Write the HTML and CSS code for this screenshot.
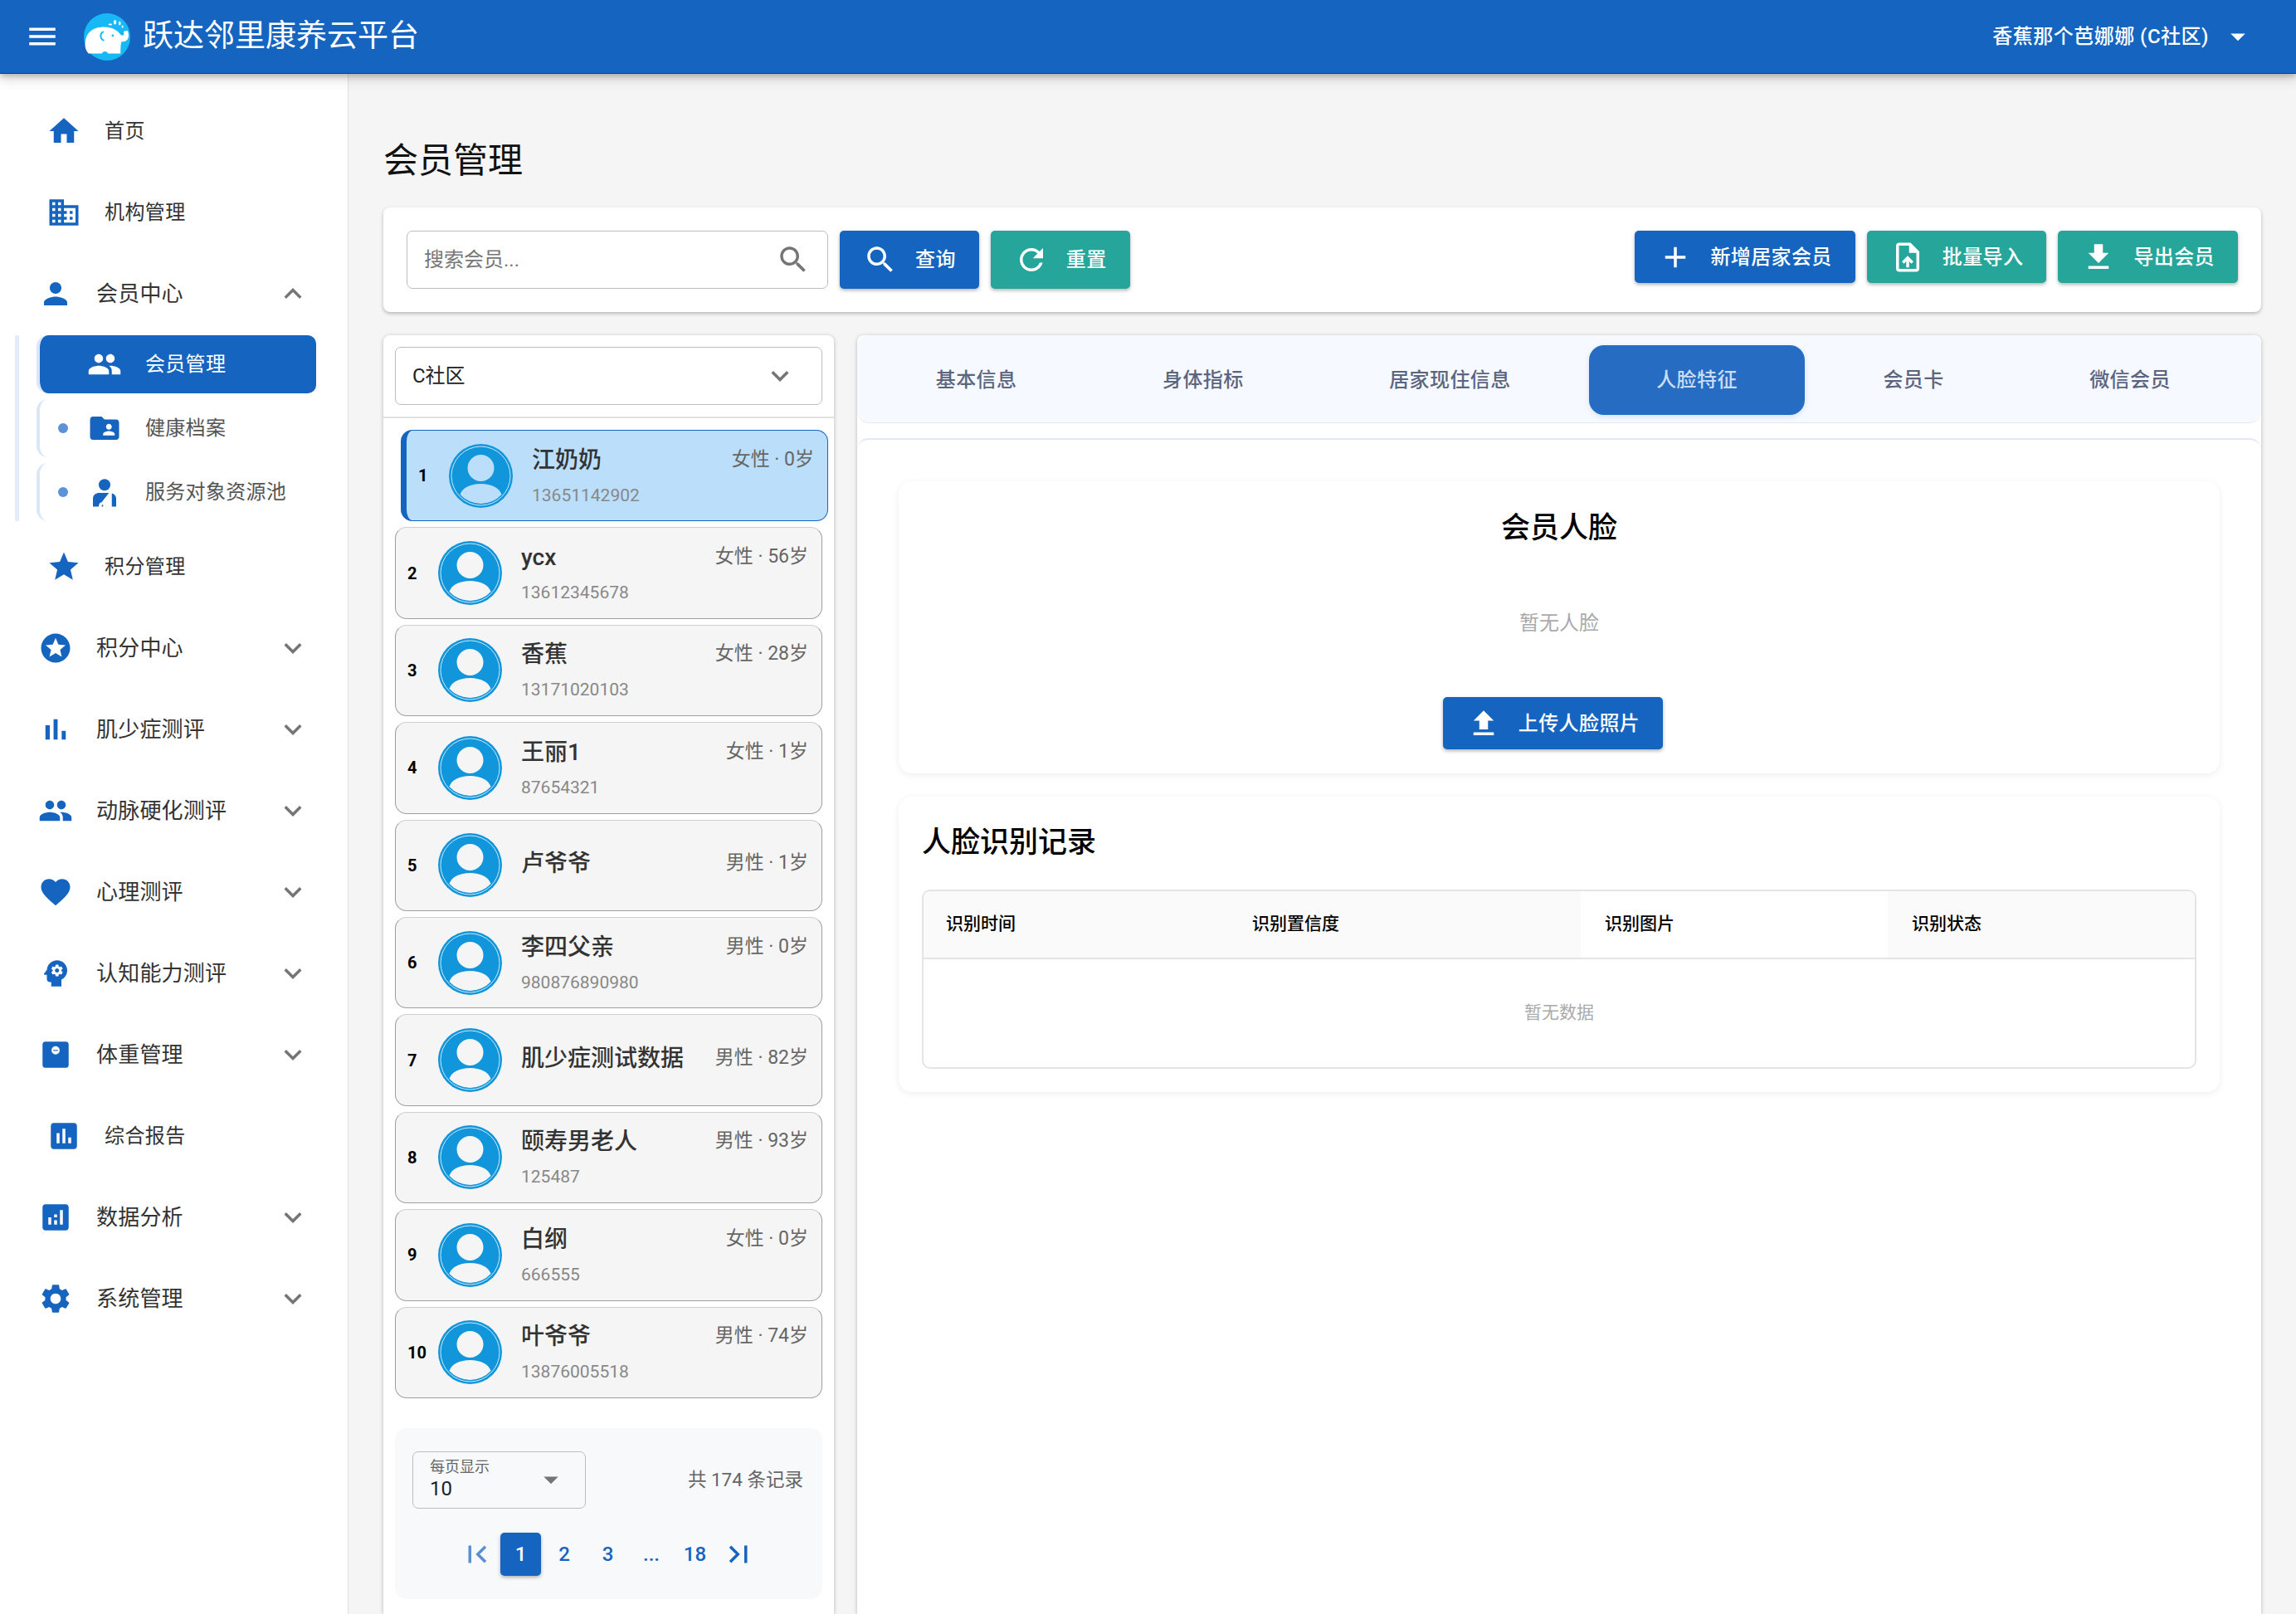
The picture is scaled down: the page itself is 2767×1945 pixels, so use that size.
FILE: index.html
```html
<!DOCTYPE html>
<html lang="zh-CN">
<head>
    <meta charset="UTF-8">
    <meta name="viewport" content="width=device-width, initial-scale=1.0">
    <title>跃达邻里康养云平台</title>
    <link rel="stylesheet" href="styles.css">
</head>
<body>
    <!-- 图标 -->
    <svg class="sprite" xmlns="http://www.w3.org/2000/svg">
        <symbol id="ic-menu" viewBox="0 0 24 24"><path d="M3 18h18v-2H3v2zm0-5h18v-2H3v2zm0-7v2h18V6H3z"/></symbol>
        <symbol id="ic-home" viewBox="0 0 24 24"><path d="M10 20v-6h4v6h5v-8h3L12 3 2 12h3v8z"/></symbol>
        <symbol id="ic-domain" viewBox="0 0 24 24"><path d="M12 7V3H2v18h20V7H12zM6 19H4v-2h2v2zm0-4H4v-2h2v2zm0-4H4V9h2v2zm0-4H4V5h2v2zm4 12H8v-2h2v2zm0-4H8v-2h2v2zm0-4H8V9h2v2zm0-4H8V5h2v2zm10 12h-8v-2h2v-2h-2v-2h2v-2h-2V9h8v10zm-2-8h-2v2h2v-2zm0 4h-2v2h2v-2z"/></symbol>
        <symbol id="ic-person" viewBox="0 0 24 24"><path d="M12 12c2.21 0 4-1.79 4-4s-1.79-4-4-4-4 1.79-4 4 1.79 4 4 4zm0 2c-2.67 0-8 1.34-8 4v2h16v-2c0-2.66-5.33-4-8-4z"/></symbol>
        <symbol id="ic-people" viewBox="0 0 24 24"><path d="M16 11c1.66 0 2.99-1.34 2.99-3S17.66 5 16 5c-1.66 0-3 1.34-3 3s1.34 3 3 3zm-8 0c1.66 0 2.99-1.34 2.99-3S9.66 5 8 5C6.34 5 5 6.34 5 8s1.34 3 3 3zm0 2c-2.33 0-7 1.17-7 3.5V19h14v-2.5c0-2.33-4.67-3.5-7-3.5zm8 0c-.29 0-.62.02-.97.05 1.16.84 1.97 1.97 1.97 3.45V19h6v-2.5c0-2.33-4.67-3.5-7-3.5z"/></symbol>
        <symbol id="ic-folder" viewBox="0 0 24 24"><path d="M20 6h-8l-2-2H4c-1.1 0-1.99.9-1.99 2L2 18c0 1.1.9 2 2 2h16c1.1 0 2-.9 2-2V8c0-1.1-.9-2-2-2zm-5 3c1.1 0 2 .9 2 2s-.9 2-2 2-2-.9-2-2 .9-2 2-2zm4 8h-8v-1c0-1.33 2.67-2 4-2s4 .67 4 2v1z"/></symbol>
        <symbol id="ic-injury" viewBox="0 0 24 24"><circle cx="12" cy="7" r="4"/><path d="M4 22v-5.500C4 14 6 12.500 8.500 12.500H15l-5 6.500c-1.200.1-2 1.300-2 3z"/><path d="M10 22c0-.8.4-1.400 1-1.600V22z"/><path d="M17 12.800c1.700.4 3 1.800 3 3.700V22h-3z"/></symbol>
        <symbol id="ic-star" viewBox="0 0 24 24"><path d="M12 17.270L18.180 21l-1.640-7.030L22 9.240l-7.190-.61L12 2 9.190 8.630 2 9.240l5.460 4.730L5.820 21z"/></symbol>
        <symbol id="ic-stars" viewBox="0 0 24 24"><path d="M11.990 2C6.470 2 2 6.480 2 12s4.470 10 9.990 10C17.520 22 22 17.520 22 12S17.520 2 11.990 2zm4.240 16L12 15.450 7.770 18l1.120-4.810-3.730-3.230 4.920-.42L12 5l1.920 4.530 4.920.42-3.730 3.230L16.230 18z"/></symbol>
        <symbol id="ic-bar" viewBox="0 0 24 24"><path d="M5 9.200h3V19H5zM10.600 5h2.800v14h-2.800zm5.600 8H19v6h-2.800z"/></symbol>
        <symbol id="ic-heart" viewBox="0 0 24 24"><path d="M12 21.350l-1.450-1.320C5.400 15.360 2 12.280 2 8.500 2 5.420 4.420 3 7.500 3c1.740 0 3.410.81 4.500 2.090C13.090 3.810 14.760 3 16.500 3 19.580 3 22 5.420 22 8.500c0 3.780-3.400 6.860-8.550 11.540L12 21.350z"/></symbol>
        <symbol id="ic-psychology" viewBox="0 0 24 24"><path d="M13 8.570c-.79 0-1.430.64-1.430 1.430s.64 1.430 1.430 1.430 1.430-.64 1.430-1.430-.64-1.430-1.430-1.430z"/><path d="M13 3C9.250 3 6.200 5.940 6.020 9.640L4.100 12.200c-.25.33-.01.8.4.8H6v3c0 1.100.9 2 2 2h1v3h7v-4.680c2.360-1.120 4-3.530 4-6.320 0-3.870-3.130-7-7-7zm3 7c0 .13-.01.26-.02.39l.83.66c.08.06.1.16.05.25l-.8 1.390c-.05.09-.16.12-.24.09l-.99-.4c-.21.16-.43.29-.67.39L14 13.830c-.01.1-.1.17-.2.17h-1.600c-.1 0-.18-.07-.2-.17l-.15-1.060c-.25-.1-.47-.23-.68-.39l-.99.4c-.09.03-.2 0-.25-.09l-.8-1.390c-.05-.08-.03-.19.05-.25l.84-.66c-.01-.13-.02-.26-.02-.39s.02-.27.04-.39l-.85-.66c-.08-.06-.1-.16-.05-.26l.8-1.380c.05-.09.15-.12.24-.09l1 .4c.2-.15.43-.29.67-.39L12 6.170c.02-.1.1-.17.2-.17h1.600c.1 0 .18.07.2.17l.15 1.060c.24.1.46.23.67.39l1-.4c.09-.03.2 0 .24.09l.8 1.380c.05.09.03.2-.05.26l-.85.66c.03.12.04.25.04.39z"/></symbol>
        <symbol id="ic-weight" viewBox="0 0 24 24"><path fill-rule="evenodd" d="M5 3h14a2 2 0 0 1 2 2v14a2 2 0 0 1-2 2H5a2 2 0 0 1-2-2V5a2 2 0 0 1 2-2zm7 3.200a2.800 2.800 0 1 0 0 5.600 2.800 2.800 0 0 0 0-5.600zM10.500 8.600h.8v.8h-.8zm1.100 0h.8v.8h-.8zm1.100 0h.8v.8h-.8z"/></symbol>
        <symbol id="ic-assessment" viewBox="0 0 24 24"><path d="M19 3H5c-1.100 0-2 .9-2 2v14c0 1.100.9 2 2 2h14c1.100 0 2-.9 2-2V5c0-1.100-.9-2-2-2zM9 17H7v-7h2v7zm4 0h-2V7h2v10zm4 0h-2v-4h2v4z"/></symbol>
        <symbol id="ic-analytics" viewBox="0 0 24 24"><path d="M19 3H5c-1.100 0-2 .9-2 2v14c0 1.100.9 2 2 2h14c1.100 0 2-.9 2-2V5c0-1.100-.9-2-2-2zM9 17H7v-5h2v5zm4 0h-2v-3h2v3zm0-5h-2v-2h2v2zm4 5h-2V7h2v10z"/></symbol>
        <symbol id="ic-settings" viewBox="0 0 24 24"><path d="M19.140 12.940c.04-.3.06-.61.06-.94 0-.32-.02-.64-.07-.94l2.030-1.580c.18-.14.23-.41.12-.61l-1.920-3.320c-.12-.22-.37-.29-.59-.22l-2.390.96c-.5-.38-1.030-.7-1.620-.94l-.36-2.540c-.04-.24-.24-.41-.48-.41h-3.840c-.24 0-.43.17-.47.41l-.36 2.540c-.59.24-1.130.57-1.620.94l-2.390-.96c-.22-.08-.47 0-.59.22L2.740 8.870c-.12.21-.08.47.12.61l2.030 1.580c-.05.3-.09.63-.09.94s.02.64.07.94l-2.030 1.580c-.18.14-.23.41-.12.61l1.920 3.320c.12.22.37.29.59.22l2.390-.96c.5.38 1.030.7 1.620.94l.36 2.540c.05.24.24.41.48.41h3.840c.24 0 .44-.17.47-.41l.36-2.540c.59-.24 1.130-.56 1.620-.94l2.390.96c.22.08.47 0 .59-.22l1.920-3.320c.12-.22.07-.47-.12-.61l-2.010-1.580zM12 15.600c-1.980 0-3.600-1.620-3.600-3.600s1.620-3.600 3.600-3.600 3.600 1.620 3.600 3.600-1.620 3.600-3.600 3.600z"/></symbol>
        <symbol id="ic-more" viewBox="0 0 24 24"><path d="M16.590 8.590L12 13.170 7.410 8.590 6 10l6 6 6-6z"/></symbol>
        <symbol id="ic-less" viewBox="0 0 24 24"><path d="M12 8l-6 6 1.410 1.410L12 10.830l4.590 4.580L18 14z"/></symbol>
        <symbol id="ic-drop" viewBox="0 0 24 24"><path d="M7 10l5 5 5-5z"/></symbol>
        <symbol id="ic-search" viewBox="0 0 24 24"><path d="M15.500 14h-.79l-.28-.27C15.410 12.590 16 11.110 16 9.500 16 5.910 13.090 3 9.500 3S3 5.910 3 9.500 5.910 16 9.500 16c1.610 0 3.090-.59 4.230-1.570l.27.28v.79l5 4.990L20.490 19l-4.990-5zm-6 0C7.010 14 5 11.990 5 9.500S7.010 5 9.500 5 14 7.010 14 9.500 11.990 14 9.500 14z"/></symbol>
        <symbol id="ic-refresh" viewBox="0 0 24 24"><path d="M17.650 6.350C16.200 4.900 14.210 4 12 4c-4.420 0-7.990 3.580-7.990 8s3.570 8 7.990 8c3.730 0 6.840-2.550 7.730-6h-2.080c-.82 2.330-3.040 4-5.650 4-3.310 0-6-2.690-6-6s2.690-6 6-6c1.660 0 3.140.69 4.220 1.780L13 11h7V4l-2.350 2.350z"/></symbol>
        <symbol id="ic-add" viewBox="0 0 24 24"><path d="M19 13h-6v6h-2v-6H5v-2h6V5h2v6h6v2z"/></symbol>
        <symbol id="ic-upload-file" viewBox="0 0 24 24"><path d="M14 2H6c-1.100 0-1.990.9-1.990 2L4 20c0 1.100.89 2 1.990 2H18c1.100 0 2-.9 2-2V8l-6-6zm4 18H6V4h7v5h5v11zM8 15.010l1.410 1.410L11 14.840V19h2v-4.160l1.590 1.590L16 15.010 12.010 11 8 15.010z"/></symbol>
        <symbol id="ic-download" viewBox="0 0 24 24"><path d="M19 9h-4V3H9v6H5l7 7 7-7zM5 18v2h14v-2H5z"/></symbol>
        <symbol id="ic-upload" viewBox="0 0 24 24"><path d="M9 16h6v-6h4l-7-7-7 7h4zm-4 2h14v2H5z"/></symbol>
        <symbol id="ic-first" viewBox="0 0 24 24"><path d="M18.410 16.590L13.820 12l4.590-4.590L17 6l-6 6 6 6zM6 6h2v12H6z"/></symbol>
        <symbol id="ic-last" viewBox="0 0 24 24"><path d="M5.590 7.410L10.180 12l-4.590 4.590L7 18l6-6-6-6zM16 6h2v12h-2z"/></symbol>
        <symbol id="ic-avatar" viewBox="0 0 77 77">
            <path fill="#1296db" fill-rule="evenodd" d="M38.500 0a38.500 38.500 0 1 0 0 77 38.500 38.500 0 0 0 0-77zM38.500 13a16 16 0 1 1 0 32 16 16 0 0 1 0-32zM13.500 61C16 53 26 48 38.500 48S61 53 63.500 61A34 34 0 0 1 13.500 61z"/>
            <circle cx="38.500" cy="38.500" r="35.500" fill="none" stroke="#dff0fa" stroke-width="0.9"/>
        </symbol>
    </svg>

    <header class="app-bar">
        <svg class="icon menu-btn"><use href="#ic-menu"/></svg>
        <svg class="logo" viewBox="33 20 167 170">
            <ellipse cx="116.500" cy="105" rx="83.500" ry="85" fill="#16b8f6"/>
            <path fill="#fff" d="M38 125C40 95 60 72 95 70c20-2 40 2 55 12 10 6 15 18 22 18 6 0 6-10 4-15l14-3c8 18 5 38-15 40h-7c-3 13-3 28-3 43h-45c-2-10-20-10-22 0H50c-10-10-14-25-12-40z"/>
            <path fill="none" stroke="#16b8f6" stroke-width="6" d="M104 86c-14 6-14 26 2 32"/>
            <circle cx="137" cy="100" r="4" fill="#16b8f6"/>
            <ellipse cx="145" cy="52" rx="5" ry="8" fill="#fff"/>
            <ellipse cx="162" cy="56" rx="4" ry="7" fill="#fff"/>
            <ellipse cx="128" cy="60" rx="7" ry="3" fill="#fff"/>
            <ellipse cx="172" cy="68" rx="3" ry="5" fill="#fff"/>
        </svg>
        <span class="app-title">跃达邻里康养云平台</span>
        <div class="user-menu">
            <span>香蕉那个芭娜娜 (C社区)</span>
            <svg class="icon"><use href="#ic-drop"/></svg>
        </div>
    </header>

    <div class="layout">
        <aside class="sidebar">
            <a class="nav-item"><svg class="icon"><use href="#ic-home"/></svg><span>首页</span></a>
            <a class="nav-item"><svg class="icon"><use href="#ic-domain"/></svg><span>机构管理</span></a>
            <a class="nav-group"><svg class="icon"><use href="#ic-person"/></svg><span>会员中心</span><svg class="icon chevron"><use href="#ic-less"/></svg></a>
            <div class="sub-list">
                <a class="sub-item active"><i class="dot"></i><svg class="icon"><use href="#ic-people"/></svg><span>会员管理</span></a>
                <a class="sub-item"><i class="dot"></i><svg class="icon"><use href="#ic-folder"/></svg><span>健康档案</span></a>
                <a class="sub-item"><i class="dot"></i><svg class="icon"><use href="#ic-injury"/></svg><span>服务对象资源池</span></a>
            </div>
            <a class="nav-item"><svg class="icon"><use href="#ic-star"/></svg><span>积分管理</span></a>
            <a class="nav-group"><svg class="icon"><use href="#ic-stars"/></svg><span>积分中心</span><svg class="icon chevron"><use href="#ic-more"/></svg></a>
            <a class="nav-group"><svg class="icon"><use href="#ic-bar"/></svg><span>肌少症测评</span><svg class="icon chevron"><use href="#ic-more"/></svg></a>
            <a class="nav-group"><svg class="icon"><use href="#ic-people"/></svg><span>动脉硬化测评</span><svg class="icon chevron"><use href="#ic-more"/></svg></a>
            <a class="nav-group"><svg class="icon"><use href="#ic-heart"/></svg><span>心理测评</span><svg class="icon chevron"><use href="#ic-more"/></svg></a>
            <a class="nav-group"><svg class="icon"><use href="#ic-psychology"/></svg><span>认知能力测评</span><svg class="icon chevron"><use href="#ic-more"/></svg></a>
            <a class="nav-group"><svg class="icon"><use href="#ic-weight"/></svg><span>体重管理</span><svg class="icon chevron"><use href="#ic-more"/></svg></a>
            <a class="nav-item"><svg class="icon"><use href="#ic-assessment"/></svg><span>综合报告</span></a>
            <a class="nav-group"><svg class="icon"><use href="#ic-analytics"/></svg><span>数据分析</span><svg class="icon chevron"><use href="#ic-more"/></svg></a>
            <a class="nav-group"><svg class="icon"><use href="#ic-settings"/></svg><span>系统管理</span><svg class="icon chevron"><use href="#ic-more"/></svg></a>
        </aside>

        <main class="content">
            <h1 class="page-title">会员管理</h1>

            <div class="toolbar">
                <div class="search-box">
                    <input type="text" placeholder="搜索会员...">
                    <svg class="icon"><use href="#ic-search"/></svg>
                </div>
                <button class="btn btn-tall btn-blue"><svg class="icon"><use href="#ic-search"/></svg>查询</button>
                <button class="btn btn-tall btn-teal"><svg class="icon"><use href="#ic-refresh"/></svg>重置</button>
                <div class="toolbar-right">
                    <button class="btn btn-blue"><svg class="icon"><use href="#ic-add"/></svg>新增居家会员</button>
                    <button class="btn btn-teal"><svg class="icon"><use href="#ic-upload-file"/></svg>批量导入</button>
                    <button class="btn btn-teal"><svg class="icon"><use href="#ic-download"/></svg>导出会员</button>
                </div>
            </div>

            <div class="panels">
                <section class="member-panel">
                    <div class="community">
                        <div class="community-select">
                            <span>C社区</span>
                            <svg class="icon"><use href="#ic-more"/></svg>
                        </div>
                    </div>
                    <div class="member-list">
                        <div class="member-card selected">
                            <b class="member-no">1</b>
                            <svg class="avatar"><use href="#ic-avatar"/></svg>
                            <div class="member-info">
                                <div class="member-top"><span class="member-name">江奶奶</span><span class="member-meta">女性 · 0岁</span></div>
                                <div class="member-phone">13651142902</div>
                            </div>
                        </div>
                        <div class="member-card">
                            <b class="member-no">2</b>
                            <svg class="avatar"><use href="#ic-avatar"/></svg>
                            <div class="member-info">
                                <div class="member-top"><span class="member-name">ycx</span><span class="member-meta">女性 · 56岁</span></div>
                                <div class="member-phone">13612345678</div>
                            </div>
                        </div>
                        <div class="member-card">
                            <b class="member-no">3</b>
                            <svg class="avatar"><use href="#ic-avatar"/></svg>
                            <div class="member-info">
                                <div class="member-top"><span class="member-name">香蕉</span><span class="member-meta">女性 · 28岁</span></div>
                                <div class="member-phone">13171020103</div>
                            </div>
                        </div>
                        <div class="member-card">
                            <b class="member-no">4</b>
                            <svg class="avatar"><use href="#ic-avatar"/></svg>
                            <div class="member-info">
                                <div class="member-top"><span class="member-name">王丽1</span><span class="member-meta">女性 · 1岁</span></div>
                                <div class="member-phone">87654321</div>
                            </div>
                        </div>
                        <div class="member-card">
                            <b class="member-no">5</b>
                            <svg class="avatar"><use href="#ic-avatar"/></svg>
                            <div class="member-info">
                                <div class="member-top"><span class="member-name">卢爷爷</span><span class="member-meta">男性 · 1岁</span></div>
                            </div>
                        </div>
                        <div class="member-card">
                            <b class="member-no">6</b>
                            <svg class="avatar"><use href="#ic-avatar"/></svg>
                            <div class="member-info">
                                <div class="member-top"><span class="member-name">李四父亲</span><span class="member-meta">男性 · 0岁</span></div>
                                <div class="member-phone">980876890980</div>
                            </div>
                        </div>
                        <div class="member-card">
                            <b class="member-no">7</b>
                            <svg class="avatar"><use href="#ic-avatar"/></svg>
                            <div class="member-info">
                                <div class="member-top"><span class="member-name">肌少症测试数据</span><span class="member-meta">男性 · 82岁</span></div>
                            </div>
                        </div>
                        <div class="member-card">
                            <b class="member-no">8</b>
                            <svg class="avatar"><use href="#ic-avatar"/></svg>
                            <div class="member-info">
                                <div class="member-top"><span class="member-name">颐寿男老人</span><span class="member-meta">男性 · 93岁</span></div>
                                <div class="member-phone">125487</div>
                            </div>
                        </div>
                        <div class="member-card">
                            <b class="member-no">9</b>
                            <svg class="avatar"><use href="#ic-avatar"/></svg>
                            <div class="member-info">
                                <div class="member-top"><span class="member-name">白纲</span><span class="member-meta">女性 · 0岁</span></div>
                                <div class="member-phone">666555</div>
                            </div>
                        </div>
                        <div class="member-card">
                            <b class="member-no">10</b>
                            <svg class="avatar"><use href="#ic-avatar"/></svg>
                            <div class="member-info">
                                <div class="member-top"><span class="member-name">叶爷爷</span><span class="member-meta">男性 · 74岁</span></div>
                                <div class="member-phone">13876005518</div>
                            </div>
                        </div>
                    </div>

                    <div class="pagination">
                        <div class="page-top">
                            <div class="page-size">
                                <div>
                                    <div class="page-size-label">每页显示</div>
                                    <div class="page-size-value">10</div>
                                </div>
                                <svg class="icon"><use href="#ic-drop"/></svg>
                            </div>
                            <span class="page-total">共 174 条记录</span>
                        </div>
                        <div class="pager">
                            <span class="page-btn faded"><svg class="icon"><use href="#ic-first"/></svg></span>
                            <span class="page-btn current">1</span>
                            <span class="page-btn">2</span>
                            <span class="page-btn">3</span>
                            <span class="page-btn dots">...</span>
                            <span class="page-btn">18</span>
                            <span class="page-btn"><svg class="icon"><use href="#ic-last"/></svg></span>
                        </div>
                    </div>
                </section>

                <section class="detail-panel">
                    <nav class="tabs">
                        <a class="tab">基本信息</a>
                        <a class="tab">身体指标</a>
                        <a class="tab">居家现住信息</a>
                        <a class="tab active">人脸特征</a>
                        <a class="tab">会员卡</a>
                        <a class="tab">微信会员</a>
                    </nav>
                    <div class="tab-body">
                        <div class="face-card">
                            <h3 class="face-title">会员人脸</h3>
                            <p class="face-empty">暂无人脸</p>
                            <button class="btn btn-blue face-upload"><svg class="icon"><use href="#ic-upload"/></svg>上传人脸照片</button>
                        </div>
                        <div class="record-card">
                            <h3 class="record-title">人脸识别记录</h3>
                            <table class="record-table">
                                <thead>
                                    <tr>
                                        <th class="col-time">识别时间</th>
                                        <th class="col-score">识别置信度</th>
                                        <th class="col-image">识别图片</th>
                                        <th class="col-state">识别状态</th>
                                    </tr>
                                </thead>
                                <tbody>
                                    <tr><td colspan="4">暂无数据</td></tr>
                                </tbody>
                            </table>
                        </div>
                    </div>
                </section>
            </div>
        </main>
    </div>
</body>
</html>
```

FILE: styles.css
```css
* {
    box-sizing: border-box;
}
html, body {
    height: 100%;
    overflow: hidden;
}
body {
    margin: 0;
    height: 1945px;
    background-color: #f5f5f5;
    color: #333;
    font-family: Roboto, "Noto Sans CJK SC", sans-serif;
    font-size: 24px;
    line-height: 1.5;
}
.sprite {
    display: none;
}
.icon {
    width: 42px;
    height: 42px;
    flex: none;
    fill: currentColor;
}

/* 顶部栏 */
.app-bar {
    position: relative;
    z-index: 5;
    display: flex;
    align-items: center;
    height: 88px;
    padding: 0 49px 0 30px;
    background-color: #1565c0;
    color: #fff;
    box-shadow: 0 1px 0 #0d3f7a, 0 4px 6px rgba(0,0,0,0.2), 0 8px 14px rgba(0,0,0,0.14);
}
.logo {
    width: 56px;
    height: 57px;
    margin-left: 29px;
    flex: none;
}
.app-title {
    margin-left: 15px;
    font-size: 37px;
}
.user-menu {
    display: flex;
    align-items: center;
    gap: 14px;
    margin-left: auto;
    font-weight: 500;
    letter-spacing: 0.5px;
}

.layout {
    display: flex;
    height: 1857px;
}

/* 侧边栏 */
.sidebar {
    width: 420px;
    flex: none;
    padding-top: 21px;
    background-color: #fff;
    border-right: 1px solid #e0e0e0;
}
.nav-item, .nav-group {
    display: flex;
    align-items: center;
    height: 98px;
    gap: 28px;
}
.nav-item {
    padding-left: 56px;
    letter-spacing: 0.4px;
}
.nav-group {
    padding: 0 45px 0 46px;
    font-size: 26px;
    letter-spacing: 0.2px;
}
.nav-item .icon, .nav-group .icon {
    color: #1565c0;
}
.nav-group .chevron {
    margin-left: auto;
    color: #757575;
}
.sub-list {
    margin: 1px 0 6px 18px;
    padding-left: 21px;
    border-left: 5px solid #e3ecfb;
}
.sub-item {
    display: flex;
    align-items: center;
    width: 337px;
    height: 70px;
    margin-bottom: 7px;
    padding-left: 22px;
    border-left: 4px solid #dbe6f8;
    border-radius: 14px 10px 10px 14px;
    color: #555;
    letter-spacing: 0.3px;
}
.sub-item:last-child {
    margin-bottom: 0;
}
.sub-item .icon {
    margin: 0 28px 0 23px;
    color: #1565c0;
}
.dot {
    width: 12px;
    height: 12px;
    flex: none;
    border-radius: 50%;
    background-color: #5c93d8;
}
.sub-item.active {
    background-color: #1565c0;
    background-clip: padding-box;
    color: #fff;
}
.sub-item.active .dot {
    background-color: transparent;
}
.sub-item.active .icon {
    color: #fff;
}

/* 主区域 */
.content {
    flex: 1;
    min-width: 0;
    display: flex;
    flex-direction: column;
    padding: 76px 42px 0 42px;
}
.page-title {
    margin: 0 0 26px;
    color: #111;
    font-size: 42px;
    font-weight: 400;
    line-height: 60px;
}
.toolbar {
    display: flex;
    align-items: flex-start;
    gap: 14px;
    height: 126px;
    padding: 28px;
    background-color: #fff;
    border-radius: 8px;
    box-shadow: 0 2px 4px rgba(0,0,0,0.25);
}
.toolbar-right {
    display: flex;
    gap: 14px;
    margin-left: auto;
}
.search-box {
    display: flex;
    align-items: center;
    width: 508px;
    height: 70px;
    padding: 0 20px;
    border: 1px solid #bdbdbd;
    border-radius: 7px;
    color: #757575;
}
.search-box input {
    flex: 1;
    min-width: 0;
    padding: 0;
    border: none;
    outline: none;
    font: inherit;
    line-height: normal;
}
.search-box input::placeholder {
    color: #777;
}
.btn {
    display: inline-flex;
    align-items: center;
    gap: 21px;
    height: 63px;
    padding: 0 28px;
    border: none;
    border-radius: 5px;
    color: #fff;
    font-family: inherit;
    font-size: 24px;
    font-weight: 500;
    line-height: 1.5;
    letter-spacing: 0.4px;
    box-shadow: 0 2px 4px rgba(0,0,0,0.3);
}
.btn-tall {
    height: 70px;
}
.btn-blue {
    background-color: #1565c0;
}
.btn-teal {
    background-color: #26a69a;
}

.panels {
    flex: 1;
    min-height: 0;
    display: flex;
    gap: 28px;
    margin-top: 28px;
}

/* 会员列表 */
.member-panel {
    width: 543px;
    flex: none;
    background-color: #fff;
    border-radius: 8px 8px 0 0;
    box-shadow: 0 1px 5px rgba(0,0,0,0.25);
}
.community {
    padding: 14px;
    border-bottom: 2px solid #e0e0e0;
}
.community-select {
    display: flex;
    align-items: center;
    justify-content: space-between;
    height: 70px;
    padding: 0 29px 0 20px;
    border: 1px solid #bdbdbd;
    border-radius: 7px;
    color: #222;
}
.community-select .icon {
    color: #757575;
}
.member-list {
    display: flex;
    flex-direction: column;
    gap: 7px;
    padding: 14px 14px 0;
}
.member-card {
    display: flex;
    align-items: center;
    height: 110.4px;
    padding: 0 16px 0 14px;
    background-color: #f5f5f5;
    border: 1.5px solid #9e9e9e;
    border-top-color: #cfcfcf;
    border-radius: 14px;
}
.member-card.selected {
    transform: translateX(7px);
    background-color: #bbdefb;
    border: 1.5px solid #1565c0;
    border-left: 7px solid #1565c0;
}
.member-no {
    width: 37px;
    flex: none;
    color: #000;
    font-size: 20px;
}
.avatar {
    width: 77px;
    height: 77px;
    flex: none;
}
.member-info {
    flex: 1;
    min-width: 0;
    display: flex;
    flex-direction: column;
    gap: 7px;
    margin-left: 23px;
}
.member-top {
    display: flex;
    align-items: flex-start;
    justify-content: space-between;
}
.member-top:only-child {
    margin-top: -3px;
}
.member-name {
    color: #333;
    font-size: 28px;
    font-weight: 500;
    line-height: 40px;
}
.member-meta {
    color: #666;
    font-size: 23px;
    line-height: 37px;
}
.member-phone {
    color: #888;
    font-size: 21px;
    line-height: 30px;
}

/* 分页 */
.pagination {
    margin: 36px 14px 0;
    padding: 28px 23px 28px 21px;
    background-color: #f8f9fb;
    border-radius: 14px;
}
.page-top {
    display: flex;
    align-items: center;
    justify-content: space-between;
}
.page-size {
    display: flex;
    align-items: center;
    justify-content: space-between;
    width: 209px;
    height: 69px;
    padding: 0 20px 0 20px;
    border: 1px solid #bdbdbd;
    border-radius: 7px;
}
.page-size .icon {
    color: #757575;
}
.page-size-label {
    color: #666;
    font-size: 18px;
    line-height: 22px;
}
.page-size-value {
    color: #222;
    line-height: 30px;
}
.page-total {
    color: #666;
    font-size: 22.5px;
}
.pager {
    display: flex;
    justify-content: center;
    gap: 3.500px;
    margin-top: 29px;
}
.page-btn {
    display: flex;
    align-items: center;
    justify-content: center;
    width: 49px;
    height: 52px;
    border-radius: 5px;
    color: #1565c0;
    font-weight: 500;
}
.page-btn.faded {
    opacity: 0.7;
}
.page-btn.current {
    background-color: #1565c0;
    color: #fff;
    box-shadow: 0 2px 4px rgba(0,0,0,0.3);
}

/* 详情 */
.detail-panel {
    flex: 1;
    min-width: 0;
    background-color: #fff;
    border-radius: 8px 8px 0 0;
    box-shadow: 0 1px 5px rgba(0,0,0,0.25);
}
.tabs {
    display: flex;
    gap: 14px;
    height: 106px;
    padding: 12px 14px 0;
    background-color: #f6f9ff;
    border-bottom: 1px solid #e3e8f2;
    border-radius: 14px;
}
.tab {
    display: flex;
    align-items: center;
    height: 84px;
    padding: 0 80.8px;
    border-radius: 18px;
    color: #5c6580;
    font-weight: 500;
    letter-spacing: 0.4px;
}
.tab.active {
    background-color: #256cc2;
    color: #c9dcf3;
    box-shadow: 0 2px 6px rgba(21,101,192,0.15);
}
.tab-body {
    display: flex;
    flex-direction: column;
    gap: 28px;
    margin-top: 18px;
    padding: 50px;
    border-top: 2px solid #e4e8f2;
    border-radius: 14px 14px 0 0;
}
.face-card, .record-card {
    background-color: #fff;
    border-radius: 16px;
    box-shadow: 0 2px 8px rgba(0,0,0,0.07);
}
.face-card {
    display: flex;
    flex-direction: column;
    align-items: center;
    height: 352px;
    padding-top: 32px;
}
.face-title {
    margin: 0;
    color: #000;
    font-size: 35px;
    font-weight: 500;
    line-height: 50px;
}
.face-empty {
    margin: 72px 0 72px;
    color: #aaa;
    line-height: 34px;
}
.face-upload {
    margin-right: 15px;
}
.record-card {
    height: 356px;
    padding: 31px 28px 0 28px;
}
.record-title {
    margin: 0 0 31px;
    color: #000;
    font-size: 35px;
    font-weight: 500;
    line-height: 50px;
}
.record-table {
    width: 1536px;
    table-layout: fixed;
    border-collapse: separate;
    border-spacing: 0;
    border: 2px solid #e4e4e4;
    border-radius: 10px;
    overflow: hidden;
    font-size: 21px;
}
.record-table th {
    height: 82px;
    padding: 0 0 0 29px;
    background-color: #fafafa;
    border-bottom: 2px solid #e4e4e4;
    color: #000;
    font-weight: 500;
    text-align: left;
}
.record-table .col-time {
    width: 367px;
    padding-left: 27px;
}
.record-table .col-score {
    width: 425px;
}
.record-table .col-image {
    width: 370px;
    background-color: #fff;
}
.record-table td {
    height: 130px;
    color: #aaa;
    text-align: center;
}
```
